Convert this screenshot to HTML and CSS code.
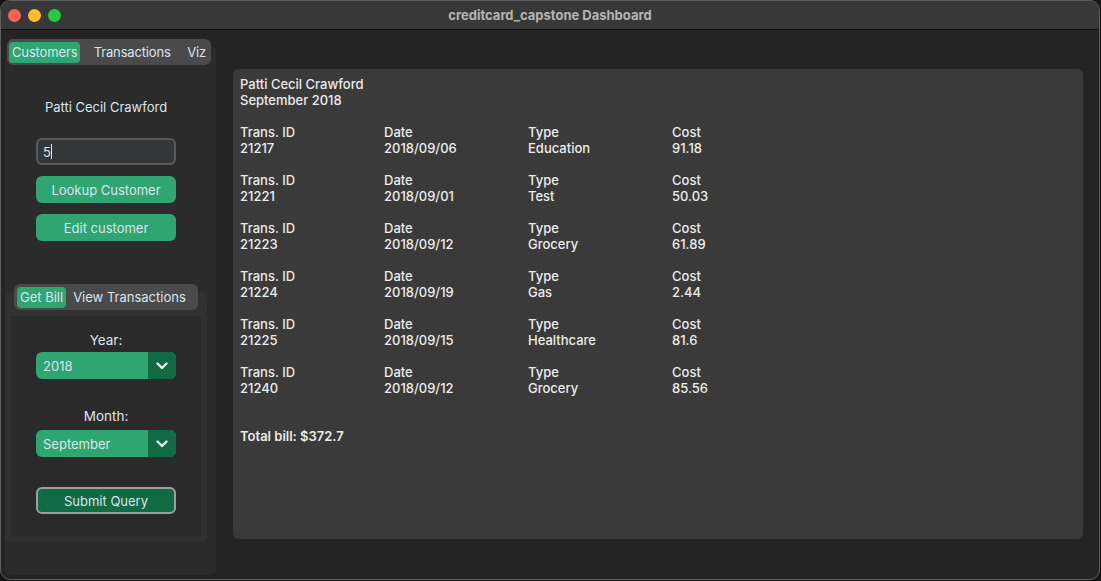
FILE: index.html
```html
<!DOCTYPE html>
<html>
<head>
<meta charset="utf-8">
<title>creditcard_capstone Dashboard</title>
<link rel="stylesheet" href="styles.css">
</head>
<body>
<div class="window">
  <div class="titlebar">
    <div class="lights">
      <span class="light red"></span>
      <span class="light yellow"></span>
      <span class="light green"></span>
    </div>
    <div class="title">creditcard_capstone Dashboard</div>
  </div>
  <div class="content">
    <aside class="sidebar">
      <div class="seg seg-main">
        <span class="seg-item active">Customers</span>
        <span class="seg-item">Transactions</span>
        <span class="seg-item">Viz</span>
      </div>
      <div class="side-frame">
        <div class="cust-name">Patti Cecil Crawford</div>
        <div class="entry"><span class="entry-text">5</span><span class="caret"></span></div>
        <div class="btn green">Lookup Customer</div>
        <div class="btn green">Edit customer</div>

        <div class="subtab">
          <div class="seg seg-sub">
            <span class="seg-item active">Get Bill</span>
            <span class="seg-item">View Transactions</span>
          </div>
          <div class="sub-frame">
            <div class="sub-inner">
              <div class="field-label">Year:</div>
              <div class="dropdown">
                <span class="dd-value">2018</span>
                <span class="dd-arrow"><svg width="12" height="8" viewBox="0 0 12 8"><path d="M1.5 1.5 L6 6 L10.5 1.5" fill="none" stroke="#e8eef2" stroke-width="2.4" stroke-linecap="round" stroke-linejoin="round"/></svg></span>
              </div>
              <div class="field-label month">Month:</div>
              <div class="dropdown dd-month">
                <span class="dd-value">September</span>
                <span class="dd-arrow"><svg width="12" height="8" viewBox="0 0 12 8"><path d="M1.5 1.5 L6 6 L10.5 1.5" fill="none" stroke="#e8eef2" stroke-width="2.4" stroke-linecap="round" stroke-linejoin="round"/></svg></span>
              </div>
              <div class="btn submit">Submit Query</div>
            </div>
          </div>
        </div>
      </div>
    </aside>
    <main class="panel">
      <div class="block">
        <div>Patti Cecil Crawford</div>
        <div>September 2018</div>
      </div>
      <div class="trans">
        <div class="col"><div>Trans. ID</div><div>21217</div></div>
        <div class="col"><div>Date</div><div>2018/09/06</div></div>
        <div class="col"><div>Type</div><div>Education</div></div>
        <div class="col"><div>Cost</div><div>91.18</div></div>
      </div>
      <div class="trans">
        <div class="col"><div>Trans. ID</div><div>21221</div></div>
        <div class="col"><div>Date</div><div>2018/09/01</div></div>
        <div class="col"><div>Type</div><div>Test</div></div>
        <div class="col"><div>Cost</div><div>50.03</div></div>
      </div>
      <div class="trans">
        <div class="col"><div>Trans. ID</div><div>21223</div></div>
        <div class="col"><div>Date</div><div>2018/09/12</div></div>
        <div class="col"><div>Type</div><div>Grocery</div></div>
        <div class="col"><div>Cost</div><div>61.89</div></div>
      </div>
      <div class="trans">
        <div class="col"><div>Trans. ID</div><div>21224</div></div>
        <div class="col"><div>Date</div><div>2018/09/19</div></div>
        <div class="col"><div>Type</div><div>Gas</div></div>
        <div class="col"><div>Cost</div><div>2.44</div></div>
      </div>
      <div class="trans">
        <div class="col"><div>Trans. ID</div><div>21225</div></div>
        <div class="col"><div>Date</div><div>2018/09/15</div></div>
        <div class="col"><div>Type</div><div>Healthcare</div></div>
        <div class="col"><div>Cost</div><div>81.6</div></div>
      </div>
      <div class="trans">
        <div class="col"><div>Trans. ID</div><div>21240</div></div>
        <div class="col"><div>Date</div><div>2018/09/12</div></div>
        <div class="col"><div>Type</div><div>Grocery</div></div>
        <div class="col"><div>Cost</div><div>85.56</div></div>
      </div>
      <div class="total">Total bill: $372.7</div>
    </main>
  </div>
</div>
</body>
</html>
```

FILE: styles.css
```css
* { box-sizing: border-box; }
html, body { margin: 0; padding: 0; }
body {
  background: #141414;
  width: 1101px;
  height: 581px;
  overflow: hidden;
  font-family: Inter, "Liberation Sans", sans-serif;
  font-size: 13px;
  line-height: 16px;
}
.window {
  width: 1100px;
  height: 580px;
  border: 1px solid #5e5e5e;
  border-radius: 10px;
  overflow: hidden;
  background: #242424;
  display: flex;
  flex-direction: column;
}
.titlebar {
  height: 29px;
  flex: none;
  background: #383838;
  border-bottom: 1px solid #0e0e0e;
  display: flex;
  align-items: center;
  position: relative;
}
.lights {
  display: flex;
  gap: 7px;
  padding-left: 7px;
  padding-top: 1px;
}
.light {
  width: 13px;
  height: 13px;
  border-radius: 50%;
  display: block;
}
.red { background: #fe5f57; }
.yellow { background: #febc2e; }
.green { background: #28c840; }
.title {
  position: absolute;
  left: 0;
  right: 0;
  top: 6px;
  text-align: center;
  font-weight: 700;
  color: #b4b4b4;
}
.content {
  flex: 1;
  display: flex;
  align-items: flex-start;
}
.sidebar {
  width: 215px;
  flex: none;
  padding-top: 9px;
  padding-left: 4px;
  display: flex;
  flex-direction: column;
}
.seg {
  display: flex;
  align-items: center;
  background: #4a4a4a;
  border-radius: 6px;
  color: #dce4ee;
  position: relative;
  z-index: 1;
}
.seg-main {
  width: 204px;
  height: 26px;
  margin-left: 2px;
  padding: 0 2px;
  justify-content: space-between;
}
.seg-item {
  height: 21px;
  line-height: 21px;
  padding: 0 3px;
  border-radius: 4px;
  white-space: nowrap;
}
.seg-main .seg-item { letter-spacing: -0.15px; }
.seg-item.active {
  background: #2fa572;
}
.side-frame {
  margin-top: -19px;
  height: 529px;
  background: #2b2b2b;
  border-radius: 6px;
  padding-top: 19px;
  display: flex;
  flex-direction: column;
}
.cust-name {
  color: #dce4ee;
  width: 140px;
  margin-left: 31px;
  text-align: center;
  margin-top: 34px;
}
.entry {
  width: 140px;
  height: 27px;
  margin-left: 31px;
  margin-top: 23px;
  border: 2px solid #565b5e;
  border-radius: 6px;
  background: #343638;
  color: #dce4ee;
  display: flex;
  align-items: center;
  padding-left: 5px;
}
.caret {
  width: 1px;
  height: 15px;
  background: #dce4ee;
}
.btn {
  width: 140px;
  height: 27px;
  margin-left: 31px;
  border-radius: 6px;
  color: #dce4ee;
  display: flex;
  align-items: center;
  justify-content: center;
}
.btn.green {
  background: #2fa572;
  margin-top: 11px;
}
.subtab {
  margin-top: 43px;
  display: flex;
  flex-direction: column;
}
.seg-sub {
  width: 184px;
  height: 26px;
  margin-left: 9px;
  padding: 0 3px;
  gap: 4px;
}
.sub-frame {
  margin-top: -18px;
  width: 202px;
  height: 250px;
  background: #313131;
  border-radius: 6px;
  padding: 24px 6px 6px 6px;
}
.sub-inner {
  background: #2a2a2a;
  height: 220px;
  display: flex;
  flex-direction: column;
}
.field-label {
  color: #dce4ee;
  text-align: center;
  width: 140px;
  margin-left: 25px;
  margin-top: 16px;
  font-size: 13.5px;
}
.field-label.month { margin-top: 29px; }
.dropdown {
  width: 140px;
  height: 27px;
  margin-left: 25px;
  margin-top: 4px;
  border-radius: 6px;
  background: #2fa572;
  display: flex;
  overflow: hidden;
  color: #dce4ee;
}
.dropdown.dd-month { margin-top: 6px; }
.dd-value {
  flex: 1;
  display: flex;
  align-items: center;
  padding-left: 7px;
}
.dd-arrow {
  width: 28px;
  background: #106a43;
  display: flex;
  align-items: center;
  justify-content: center;
  padding-top: 1px;
}
.btn.submit {
  margin-left: 25px;
  margin-top: 30px;
  background: #106a43;
  border: 2px solid #9a9fa3;
}
.panel {
  margin-left: 17px;
  margin-top: 39px;
  width: 850px;
  height: 470px;
  background: #3a3a3a;
  border-radius: 6px;
  padding: 7px 7px;
  color: #ececec;
  font-weight: 500;
}
.block { margin-bottom: 16px; }
.trans {
  display: grid;
  grid-template-columns: repeat(4, 144px);
  margin-bottom: 16px;
}
.total {
  margin-top: 32px;
  font-weight: 600;
}
```
